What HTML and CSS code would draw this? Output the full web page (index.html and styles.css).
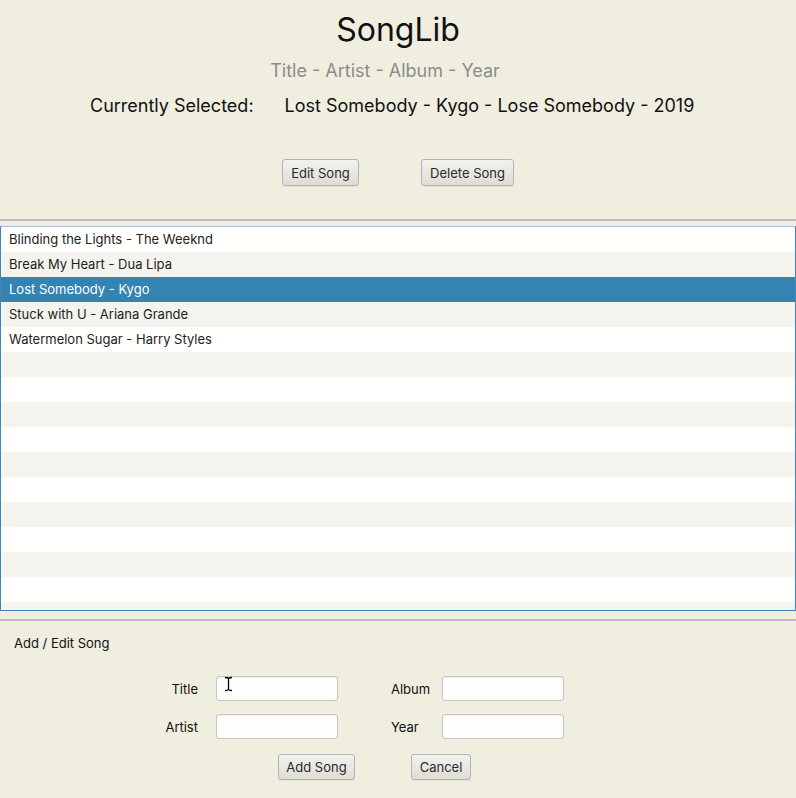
FILE: index.html
```html
<!DOCTYPE html>
<html lang="en">
<head>
<meta charset="utf-8">
<title>SongLib</title>
<link rel="stylesheet" href="styles.css">
</head>
<body>
<div class="app">
  <header class="top">
    <h1 class="title">SongLib</h1>
    <div class="subtitle">Title - Artist - Album - Year</div>
    <div class="current">
      <span class="current-label">Currently Selected:</span>
      <span class="current-value">Lost Somebody - Kygo - Lose Somebody - 2019</span>
    </div>
    <div class="actions">
      <button class="btn btn-edit">Edit Song</button>
      <button class="btn btn-delete">Delete Song</button>
    </div>
  </header>

  <div class="divider"></div>

  <div class="list-wrap">
    <ul class="list">
      <li class="row">Blinding the Lights - The Weeknd</li>
      <li class="row">Break My Heart - Dua Lipa</li>
      <li class="row selected">Lost Somebody - Kygo</li>
      <li class="row">Stuck with U - Ariana Grande</li>
      <li class="row">Watermelon Sugar - Harry Styles</li>
      <li class="row"></li>
      <li class="row"></li>
      <li class="row"></li>
      <li class="row"></li>
      <li class="row"></li>
      <li class="row"></li>
      <li class="row"></li>
      <li class="row"></li>
      <li class="row"></li>
      <li class="row"></li>
      <li class="row"></li>
    </ul>
  </div>

  <div class="divider divider-bottom"></div>

  <section class="editor">
    <div class="editor-heading">Add / Edit Song</div>
    <div class="form">
      <label class="lbl lbl-right">Title</label>
      <div class="field">
        <input class="input" type="text">
        <svg class="ibeam" width="9" height="16" viewBox="0 0 9 16">
          <path d="M1 1.5 C3 1.5 4.5 1.5 4.5 3 L4.5 13 C4.5 14.5 3 14.5 1 14.5 M8 1.5 C6 1.5 4.5 1.5 4.5 3 M4.5 13 C4.5 14.5 6 14.5 8 14.5" fill="none" stroke="#000" stroke-width="1.3"/>
        </svg>
      </div>
      <label class="lbl lbl-left">Album</label>
      <input class="input" type="text">

      <label class="lbl lbl-right">Artist</label>
      <input class="input" type="text">
      <label class="lbl lbl-left">Year</label>
      <input class="input" type="text">
    </div>
    <div class="form-actions">
      <button class="btn btn-add">Add Song</button>
      <button class="btn btn-cancel">Cancel</button>
    </div>
  </section>
</div>
</body>
</html>
```

FILE: styles.css
```css
* {
  box-sizing: border-box;
}

html, body {
  margin: 0;
  padding: 0;
}

body {
  background: #efeedf;
  font-family: Inter, "Liberation Sans", Arial, sans-serif;
  color: #1a1a1a;
  width: 796px;
  height: 798px;
  overflow: hidden;
}

.app {
  display: flex;
  flex-direction: column;
}

.top {
  height: 219px;
  display: flex;
  flex-direction: column;
  align-items: center;
  padding-top: 11px;
}

.title {
  margin: 0;
  font-weight: normal;
  font-size: 32px;
  line-height: 38px;
  color: #111;
}

.subtitle {
  margin-top: 11px;
  margin-right: 26px;
  font-size: 18px;
  line-height: 22px;
  color: #8c8c8c;
}

.current {
  margin-top: 13px;
  align-self: flex-start;
  margin-left: 90px;
  display: flex;
  gap: 31px;
  font-size: 18px;
  line-height: 22px;
  color: #111;
}

.actions {
  margin-top: 42px;
  display: flex;
  gap: 62px;
}

.btn {
  font-family: Inter, "Liberation Sans", Arial, sans-serif;
  font-size: 13px;
  color: #2a2a2a;
  height: 27px;
  padding: 0;
  white-space: nowrap;
  border: 1px solid #b4b4b4;
  border-radius: 3px;
  background: linear-gradient(#f2f2f0, #dedcd4);
  box-shadow: 0 1px 0 rgba(0,0,0,0.05);
}

.btn-edit { width: 77px; }
.btn-delete { width: 93px; }

.divider {
  height: 7px;
  border-top: 2px solid #bdbcc8;
}

.divider-bottom {
  height: 10px;
  border-top: none;
  border-bottom: 2px solid #bdbcc8;
  margin-bottom: 1px;
}

.list-wrap {
  height: 385px;
  border: 1px solid #3f87b8;
  border-top-color: #a8bdd0;
  background: #ffffff;
  overflow: hidden;
}

.list {
  list-style: none;
  margin: 0;
  padding: 0;
}

.row {
  height: 25px;
  line-height: 25px;
  padding-left: 8px;
  font-size: 13px;
  color: #222;
  background: #fffffd;
  white-space: nowrap;
}

.row:nth-child(even) {
  background: #f4f3ee;
}

.row.selected {
  background: #3384b3;
  color: #ffffff;
}

.editor {
  padding: 0 14px;
  flex: 1;
}

.editor-heading {
  font-size: 13px;
  line-height: 20px;
  margin-top: 11px;
  color: #111;
}

.form {
  margin-top: 23px;
  margin-left: 136px;
  display: grid;
  grid-template-columns: 48px 122px 68px 122px;
  column-gap: 18px;
  row-gap: 13px;
  align-items: center;
}

.lbl {
  font-size: 13px;
  color: #111;
}

.lbl-right {
  text-align: right;
}

.lbl-left {
  padding-left: 35px;
}

.field {
  position: relative;
}

.input {
  display: block;
  width: 122px;
  height: 25px;
  border: 1px solid #c4c4c4;
  border-radius: 3px;
  background: #fdfdfc;
  box-shadow: inset 0 1px 1px rgba(0,0,0,0.05);
  font-family: Inter, "Liberation Sans", Arial, sans-serif;
  font-size: 13px;
}

.ibeam {
  position: absolute;
  left: 8px;
  top: 0px;
}

.form-actions {
  margin-top: 15px;
  margin-left: 264px;
  display: flex;
  gap: 56px;
}

.btn-add { width: 77px; height: 26px; }
.btn-cancel { width: 60px; height: 26px; }
```
